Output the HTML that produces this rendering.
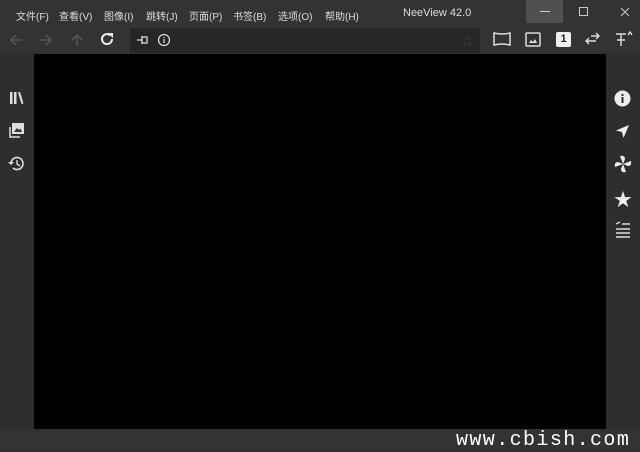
<!DOCTYPE html>
<html><head><meta charset="utf-8"><style>
body{margin:0;width:640px;height:451px;background:#2e2e2e;position:relative;overflow:hidden;font-family:"Liberation Sans","Noto Sans CJK SC",sans-serif;color:#ddd}
.a{position:absolute}
.menu span{position:absolute;top:8px;font-size:10px;color:#ddd}
svg{position:absolute}
</style></head><body>
<div class="a" style="left:0;top:0;width:640px;height:54px;background:#333"></div>
<div class="menu">
<span style="left:16px">文件(F)</span><span style="left:59px">查看(V)</span><span style="left:104px">图像(I)</span><span style="left:146px">跳转(J)</span><span style="left:189px">页面(P)</span><span style="left:233px">书签(B)</span><span style="left:278px">选项(O)</span><span style="left:325px">帮助(H)</span>
<span style="left:403px;font-size:11px;top:7px">NeeView 42.0</span>
</div>
<div class="a" style="left:526px;top:0;width:37px;height:23px;background:#505050"></div>
<div class="a" style="left:540px;top:11px;width:10px;height:1px;background:#ccc"></div>
<div class="a" style="left:579px;top:7px;width:7px;height:7px;border:1px solid #ccc"></div>
<svg style="left:620px;top:7px" width="10" height="10"><path d="M1 1L9 9M9 1L1 9" stroke="#ccc" stroke-width="1"/></svg>
<svg style="left:8px;top:32px" width="16" height="16"><path d="M14 8H3M8 3L3 8L8 13" stroke="#555" stroke-width="1.6" fill="none"/></svg>
<svg style="left:38px;top:32px" width="16" height="16"><path d="M2 8H13M8 3L13 8L8 13" stroke="#555" stroke-width="1.6" fill="none"/></svg>
<svg style="left:69px;top:32px" width="16" height="16"><path d="M8 14V3M3 8L8 3L13 8" stroke="#555" stroke-width="1.6" fill="none"/></svg>
<svg style="left:99px;top:31px" width="16" height="16"><path d="M13 8A5 5 0 1 1 11.5 4.5" stroke="#eee" stroke-width="2" fill="none"/><path d="M9 2H14V7Z" fill="#eee"/></svg>
<div class="a" style="left:130px;top:28px;width:350px;height:25px;background:#262626"></div>
<svg style="left:136px;top:34px" width="14" height="12"><path d="M1 6H6M6 2V10M6 3H11V9H6M11 3V9" stroke="#ddd" stroke-width="1.3" fill="none"/></svg>
<svg style="left:157px;top:33px" width="14" height="14"><circle cx="7" cy="7" r="5.5" stroke="#ddd" stroke-width="1.2" fill="none"/><path d="M7 6V10M7 4V5" stroke="#ddd" stroke-width="1.3"/></svg>
<div class="a" style="left:461px;top:31px;font-size:13px;color:#444">☆</div>
<svg style="left:493px;top:32px" width="18" height="14"><path d="M1 1Q9 3 17 1V13Q9 11 1 13Z" stroke="#ddd" stroke-width="1.5" fill="none"/></svg>
<svg style="left:525px;top:32px" width="16" height="15"><rect x="1" y="1" width="14" height="13" rx="1" stroke="#ddd" stroke-width="1.5" fill="none"/><path d="M4 11L6 8L8 10L10 7L12 11Z" fill="#ddd"/></svg>
<div class="a" style="left:556px;top:32px;width:15px;height:15px;background:#eee;border-radius:2px;color:#222;font-size:11px;font-weight:bold;text-align:center;line-height:15px">1</div>
<svg style="left:584px;top:31px" width="18" height="16"><path d="M2 10H12M5 7L2 10L5 13M7 5H15M12 2L15 5L12 8" stroke="#ddd" stroke-width="1.4" fill="none"/></svg>
<svg style="left:614px;top:30px" width="20" height="18"><path d="M2 4H12M7 4V10M3 10H11M7 10V16M14 5L16 2L18 5" stroke="#ddd" stroke-width="1.4" fill="none"/></svg>
<div class="a" style="left:34px;top:54px;width:572px;height:375px;background:#000"></div>
<div class="a" style="left:0;top:429px;width:640px;height:22px;background:#333"></div>
<div class="a" style="left:456px;top:429px;font-family:'Liberation Mono',monospace;font-size:20px;color:#fff;letter-spacing:1.4px;white-space:pre">www.cbish.com</div>
<svg style="left:9px;top:90px" width="16" height="16"><rect x="1" y="2" width="2.5" height="12" fill="#ddd"/><rect x="5" y="2" width="2.5" height="12" fill="#ddd"/><path d="M9 2.5L11 2L14.5 13.5L12.5 14Z" fill="#ddd"/></svg>
<svg style="left:8px;top:122px" width="17" height="17"><path d="M2 5V15H12" stroke="#ddd" stroke-width="1.5" fill="none"/><rect x="4" y="1" width="12" height="11" fill="#ddd"/><path d="M6 10L9 6L11 8L12.5 6.5L14 10Z" fill="#333"/></svg>
<svg style="left:8px;top:155px" width="17" height="17"><path d="M3 8A6 6 0 1 1 5 13" stroke="#ddd" stroke-width="1.6" fill="none"/><path d="M0 7H6L3 10Z" fill="#ddd"/><path d="M9 5V9L12 11" stroke="#ddd" stroke-width="1.4" fill="none"/></svg>
<svg style="left:614px;top:90px" width="17" height="17"><circle cx="8.5" cy="8.5" r="8" fill="#eee"/><rect x="7.5" y="7" width="2" height="6" fill="#2e2e2e"/><rect x="7.5" y="4" width="2" height="2" fill="#2e2e2e"/></svg>
<svg style="left:615px;top:124px" width="15" height="15"><path d="M14 1L1 6.5L7 8L8.5 14Z" fill="#eee"/></svg>
<svg style="left:614px;top:155px" width="18" height="18"><path d="M9 9L6 1Q11 0 11 4ZM9 9L17 6Q18 11 14 11ZM9 9L12 17Q7 18 7 14ZM9 9L1 12Q0 7 4 7Z" fill="#eee"/></svg>
<div class="a" style="left:614px;top:186px;font-size:18px;color:#eee">★</div>
<svg style="left:614px;top:221px" width="18" height="18"><path d="M2 3L6 1M8 3H16M2 8H16M2 12H16M2 16H16" stroke="#ddd" stroke-width="1.4"/></svg>
</body></html>
